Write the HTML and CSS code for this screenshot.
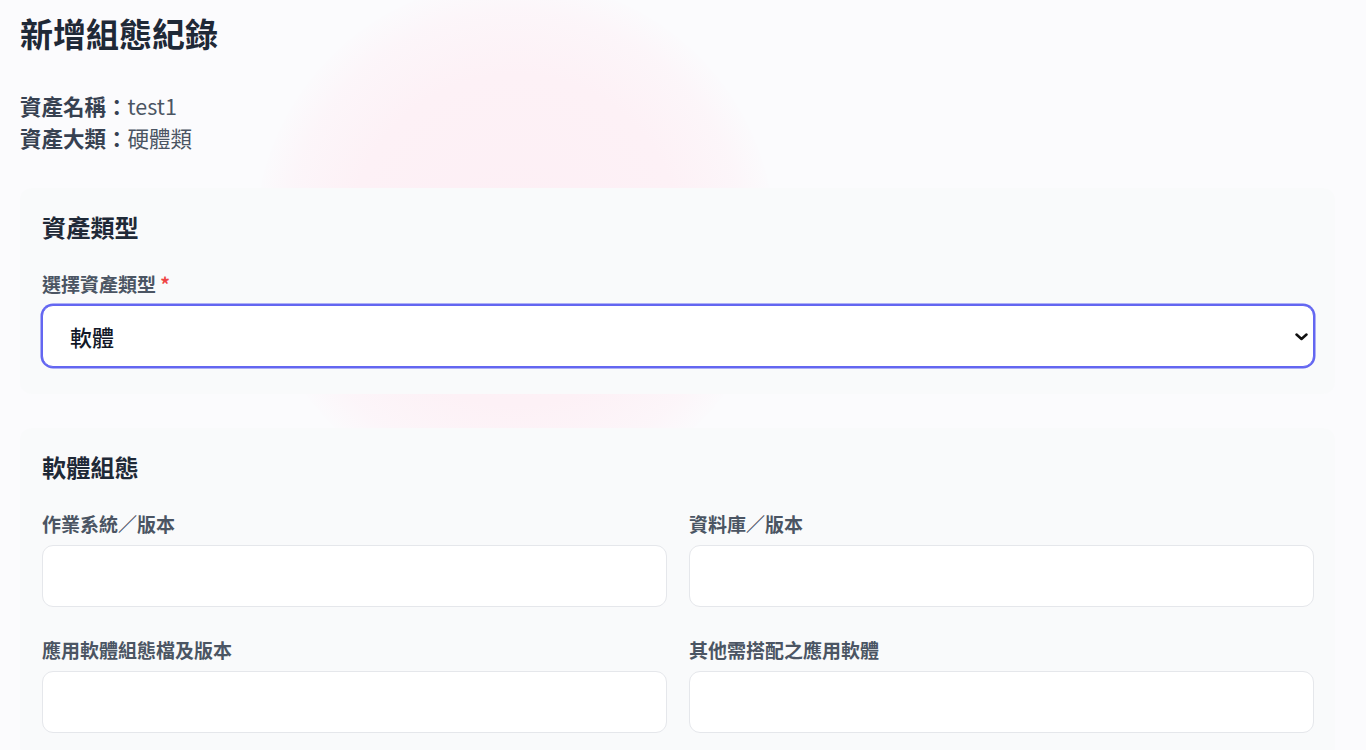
FILE: index.html
```html
<!DOCTYPE html>
<html lang="zh-Hant">
<head>
<meta charset="utf-8">
<title>新增組態紀錄</title>
<link rel="stylesheet" href="styles.css">
</head>
<body>
<div class="blob"></div>
<main class="page">
  <h1 class="title">新增組態紀錄</h1>
  <div class="info">
    <div class="info-row"><span class="info-key">資產名稱：</span><span class="info-val">test1</span></div>
    <div class="info-row"><span class="info-key">資產大類：</span><span class="info-val">硬體類</span></div>
  </div>

  <section class="card">
    <h2 class="card-title">資產類型</h2>
    <div class="field">
      <label class="label">選擇資產類型 <span class="req">*</span></label>
      <div class="select-wrap">
        <select class="select">
          <option>軟體</option>
        </select>
        <svg class="chev" width="13" height="8" viewBox="0 0 13 8"><path d="M1.5 1.5 L6.5 6 L11.5 1.5" fill="none" stroke="#111" stroke-width="2.5" stroke-linecap="round" stroke-linejoin="round"/></svg>
      </div>
    </div>
  </section>

  <section class="card">
    <h2 class="card-title">軟體組態</h2>
    <div class="grid">
      <div class="field">
        <label class="label">作業系統／版本</label>
        <input class="input" type="text">
      </div>
      <div class="field">
        <label class="label">資料庫／版本</label>
        <input class="input" type="text">
      </div>
      <div class="field">
        <label class="label">應用軟體組態檔及版本</label>
        <input class="input" type="text">
      </div>
      <div class="field">
        <label class="label">其他需搭配之應用軟體</label>
        <input class="input" type="text">
      </div>
    </div>
  </section>
</main>
</body>
</html>
```

FILE: styles.css
```css
* { box-sizing: border-box; }
html, body { margin: 0; padding: 0; }
body {
  background: #fbfbfd;
  font-family: "Noto Sans CJK TC", "Noto Sans", sans-serif;
  color: #1f2937;
  overflow: hidden;
  height: 750px;
  position: relative;
}
.blob {
  position: absolute;
  left: 255px;
  top: -20px;
  width: 520px;
  height: 520px;
  border-radius: 50%;
  background: radial-gradient(circle at center, #fdeff5 0%, #fdf1f6 45%, rgba(253,242,247,0.6) 62%, rgba(251,251,253,0) 72%);
  z-index: 0;
}
.page {
  position: relative;
  z-index: 1;
  padding: 11px 31px 0 20px;
}
.title {
  margin: 0;
  font-size: 33px;
  line-height: 44px;
  font-weight: 700;
  color: #1f2937;
}
.info {
  margin-top: 35px;
  margin-bottom: 34px;
}
.info-row {
  font-size: 21.5px;
  line-height: 32px;
}
.info-key { font-weight: 700; color: #374151; }
.info-val { font-weight: 400; color: #4b5563; }

.card {
  background: rgba(249, 250, 251, 0.96);
  border-radius: 12px;
  padding: 20px 21px 27px 22px;
  margin-bottom: 34px;
}
.card-title {
  margin: 0 0 24px 0;
  font-size: 24.2px;
  line-height: 38px;
  font-weight: 700;
  color: #1f2937;
}
.field {
  display: flex;
  flex-direction: column;
  gap: 8px;
}
.label {
  font-size: 19px;
  line-height: 27px;
  font-weight: 600;
  color: #4b5563;
}
.req { color: #ef4444; }
.select-wrap { position: relative; }
.select {
  -webkit-appearance: none;
  appearance: none;
  width: 100%;
  height: 62px;
  border: 1px solid #6366f1;
  box-shadow: 0 0 0 1.5px #6366f1;
  border-radius: 11px;
  background: #ffffff;
  padding: 0 40px 0 27px;
  font-family: "Noto Sans CJK TC", "Noto Sans", sans-serif;
  font-size: 22px;
  font-weight: 500;
  color: #111827;
  outline: none;
}
.chev {
  position: absolute;
  right: 6px;
  top: 28px;
  pointer-events: none;
}
.grid {
  display: grid;
  grid-template-columns: 1fr 1fr;
  column-gap: 22px;
  row-gap: 29px;
}
.input {
  height: 62px;
  width: 100%;
  border: 1px solid #e5e7eb;
  border-radius: 11px;
  background: #ffffff;
  padding: 0 16px;
  font-size: 18px;
  outline: none;
}
```
